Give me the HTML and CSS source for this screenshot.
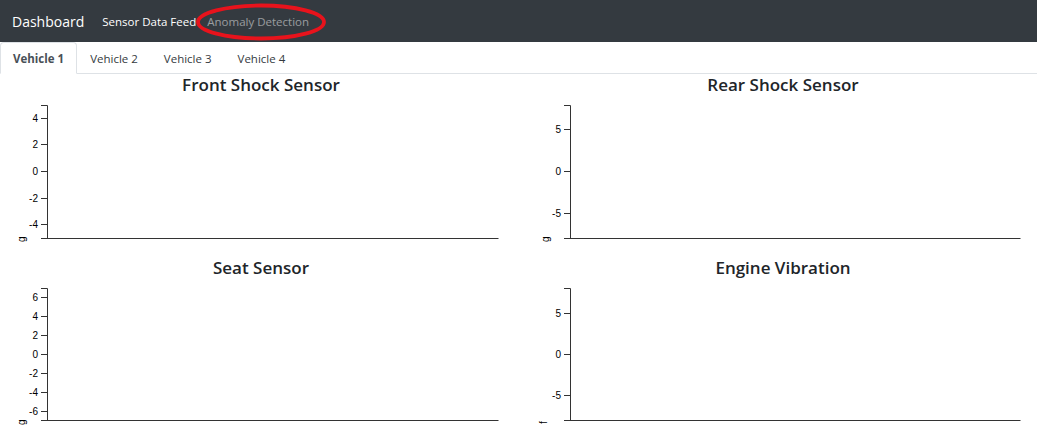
FILE: index.html
```html
<!DOCTYPE html>
<html lang="en">
<head>
<meta charset="utf-8">
<title>Dashboard</title>
<link rel="stylesheet" href="styles.css">
</head>
<body>
<nav class="navbar">
  <span class="brand">Dashboard</span>
  <a class="nav-link active">Sensor Data Feed</a>
  <a class="nav-link muted">Anomaly Detection</a>
  <svg class="annot" width="134" height="40" viewBox="0 0 134 40"><ellipse cx="66" cy="19" rx="63" ry="16.5" fill="none" stroke="#e8131c" stroke-width="3.8"/></svg>
</nav>
<div class="tabs">
  <a class="tab active">Vehicle 1</a>
  <a class="tab">Vehicle 2</a>
  <a class="tab">Vehicle 3</a>
  <a class="tab">Vehicle 4</a>
</div>
<main class="grid">
  <section class="cell">
    <h3 class="title">Front Shock Sensor</h3>
    <svg class="chart" width="522" height="159">
      <g class="axis">
        <path d="M41 7.5H47.5V140.5H41"/>
        <path d="M41 140.5H498.5"/>
        <path d="M41 20.5H47.5M41 46.5H47.5M41 73.5H47.5M41 100.5H47.5M41 126.5H47.5"/>
      </g>
      <g class="ticks">
        <text x="38" y="24">4</text>
        <text x="38" y="50">2</text>
        <text x="38" y="77">0</text>
        <text x="38" y="104">-2</text>
        <text x="38" y="130">-4</text>
      </g>
      <text class="ylabel" transform="translate(25,144) rotate(-90)">g</text>
    </svg>
  </section>
  <section class="cell">
    <h3 class="title">Rear Shock Sensor</h3>
    <svg class="chart" width="522" height="159">
      <g class="axis">
        <path d="M42 7.5H48.5V140.5H42"/>
        <path d="M42 140.5H498.5"/>
        <path d="M42 31.5H48.5M42 73.5H48.5M42 115.5H48.5"/>
      </g>
      <g class="ticks">
        <text x="39" y="35">5</text>
        <text x="39" y="77">0</text>
        <text x="39" y="119">-5</text>
      </g>
      <text class="ylabel" transform="translate(27,144) rotate(-90)">g</text>
    </svg>
  </section>
  <section class="cell">
    <h3 class="title">Seat Sensor</h3>
    <svg class="chart" width="522" height="159">
      <g class="axis">
        <path d="M41 7.5H47.5V139.5H41"/>
        <path d="M41 139.5H498.5"/>
        <path d="M41 16.5H47.5M41 35.5H47.5M41 54.5H47.5M41 73.5H47.5M41 92.5H47.5M41 111.5H47.5M41 130.5H47.5"/>
      </g>
      <g class="ticks">
        <text x="38" y="20">6</text>
        <text x="38" y="39">4</text>
        <text x="38" y="58">2</text>
        <text x="38" y="77">0</text>
        <text x="38" y="96">-2</text>
        <text x="38" y="115">-4</text>
        <text x="38" y="134">-6</text>
      </g>
      <text class="ylabel" transform="translate(25,144) rotate(-90)">g</text>
    </svg>
  </section>
  <section class="cell">
    <h3 class="title">Engine Vibration</h3>
    <svg class="chart" width="522" height="159">
      <g class="axis">
        <path d="M42 7.5H48.5V139.5H42"/>
        <path d="M42 139.5H498.5"/>
        <path d="M42 32.5H48.5M42 73.5H48.5M42 114.5H48.5"/>
      </g>
      <g class="ticks">
        <text x="39" y="36">5</text>
        <text x="39" y="77">0</text>
        <text x="39" y="118">-5</text>
      </g>
      <text class="ylabel" transform="translate(25,143) rotate(-90)">f</text>
    </svg>
  </section>
</main>
</body>
</html>
```
FILE: styles.css
```css
html, body {
  margin: 0;
  padding: 0;
  background: #fff;
  overflow: hidden;
}
body {
  width: 1037px;
  font-family: "Open Sans", "Noto Sans", sans-serif;
  color: #212529;
}
.navbar {
  position: relative;
  height: 42px;
  background: #343a40;
  display: flex;
  align-items: center;
  padding-left: 12px;
  box-sizing: border-box;
}
.brand {
  font-size: 14px;
  color: #fff;
  margin-right: 18px;
  padding-top: 1px;
}
.nav-link {
  font-size: 11.5px;
  margin-right: 11px;
  text-decoration: none;
}
.nav-link.active {
  color: #fff;
}
.nav-link.muted {
  color: rgba(255, 255, 255, 0.5);
}
.annot {
  position: absolute;
  left: 195px;
  top: 3px;
  overflow: visible;
}
.tabs {
  display: flex;
  height: 31px;
  border-bottom: 1px solid #dee2e6;
}
.tab {
  display: flex;
  align-items: center;
  padding: 0 13px;
  height: 32px;
  font-size: 11.5px;
  color: #343a40;
  box-sizing: border-box;
}
.tab.active {
  padding: 0 12px;
  border: 1px solid #dee2e6;
  border-bottom-color: #fff;
  border-radius: 4px 4px 0 0;
  background: #fff;
  font-weight: 700;
  color: #495057;
  position: relative;
  z-index: 1;
}
.grid {
  display: grid;
  grid-template-columns: 522px 522px;
}
.cell {
  display: flex;
  flex-direction: column;
}
.title {
  margin: 0;
  height: 24px;
  line-height: 22px;
  font-size: 17px;
  font-weight: 600;
  text-align: center;
  color: #212529;
}
.chart {
  display: block;
}
.axis path {
  fill: none;
  stroke: #333;
  stroke-width: 1;
}
.ticks text {
  font-family: "Liberation Sans", Arial, sans-serif;
  font-size: 10px;
  text-anchor: end;
  fill: #000;
}
.ylabel {
  font-family: "Liberation Sans", Arial, sans-serif;
  font-size: 10px;
  fill: #000;
}
```
